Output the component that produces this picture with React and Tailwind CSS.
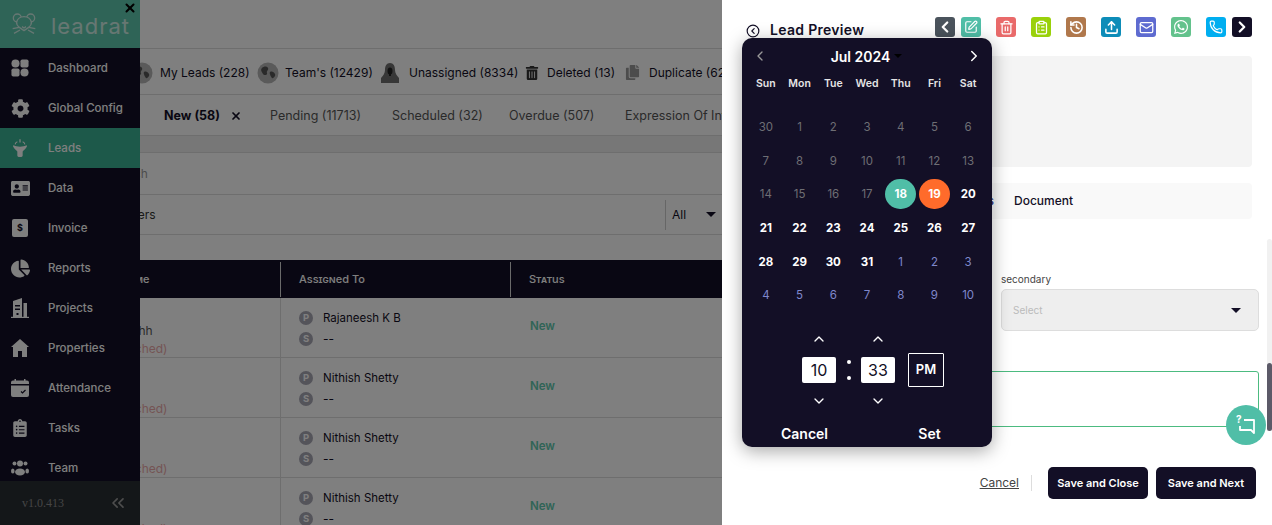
import React from "react";
import {
  ChevronLeft,
  ChevronRight,
  ChevronUp,
  ChevronDown,
  ChevronsLeft,
  CircleChevronLeft,
  SquarePen,
  Trash2,
  ClipboardList,
  History,
  Upload,
  Mail,
  Phone,
  X,
} from "lucide-react";
import {
  FaCog,
  FaAddressCard,
  FaChartPie,
  FaClipboardList,
  FaWhatsapp,
  FaTrashAlt,
  FaCopy,
} from "react-icons/fa";

const DashboardIcon = () => (
  <svg width="18" height="18" viewBox="0 0 20 20" fill="currentColor">
    <circle cx="5" cy="5" r="4.500" />
    <rect x="10.500" y="0.500" width="9" height="9" rx="2" />
    <rect x="0.500" y="10.500" width="9" height="9" rx="2" />
    <circle cx="15" cy="15" r="4.500" />
  </svg>
);

const FunnelIcon = () => (
  <svg width="16" height="18" viewBox="0 0 18 20" fill="currentColor">
    <path d="M2 7c2 1.200 4 1.600 7 1.600S14 8.200 16 7c1 0 1 1 .6 1.600C15.500 11 13 12.500 12 14v4.500c0 .8-.8 1.500-1.500 1.500h-3C6.800 20 6 19.300 6 18.500V14c-1-1.500-3.500-3-4.600-5.400C1 8 1 7 2 7z" />
    <rect x="8.300" y="0" width="1.400" height="4" rx=".7" />
    <path d="M3.500 6c.2-1.500 1-2.500 2.500-3M14.500 6c-.2-1.500-1-2.500-2.500-3" fill="none" stroke="currentColor" strokeWidth="1.200" />
  </svg>
);

const InvoiceIcon = () => (
  <div className="w-[16px] h-[18px] bg-white rounded-[2px] flex items-center justify-center text-[9px] font-bold text-[#130f26]">
    $
  </div>
);

const BuildingIcon = () => (
  <svg width="18" height="20" viewBox="0 0 18 20" fill="currentColor">
    <path d="M2 3l9-3v19H2V3zm2 4v1.500h5V7H4zm0 3.500V12h5v-1.500H4zM5.500 15v2h2v-2h-2z" fillRule="evenodd" />
    <path d="M12.500 5H16v14h-3.500z" />
    <rect x="0" y="18.800" width="18" height="1.200" />
  </svg>
);

const HouseIcon = () => (
  <svg width="18" height="18" viewBox="0 0 18 18" fill="currentColor">
    <path d="M9 0L0 8h2v10h5v-6h4v6h5V8h2L9 0z" />
  </svg>
);

const AttendanceIcon = () => (
  <svg width="18" height="18" viewBox="0 0 18 18" fill="currentColor">
    <rect x="3.500" y="0" width="1.500" height="3" />
    <rect x="13" y="0" width="1.500" height="3" />
    <path d="M0 3.500a2 2 0 012-2h14a2 2 0 012 2V5H0z" />
    <path d="M0 6.500h18V16a2 2 0 01-2 2H2a2 2 0 01-2-2z" />
    <path d="M10 12.500l1.500 1.500 3-3" fill="none" stroke="#130f26" strokeWidth="1.200" />
  </svg>
);

const TeamIcon = () => (
  <svg width="18" height="16" viewBox="0 0 18 16" fill="currentColor">
    <circle cx="9" cy="3.500" r="3" />
    <ellipse cx="9" cy="12" rx="5" ry="3.500" />
    <circle cx="3.500" cy="3.500" r="2" />
    <circle cx="14.500" cy="3.500" r="2" />
    <ellipse cx="1.800" cy="11" rx="1.800" ry="2.500" />
    <ellipse cx="16.200" cy="11" rx="1.800" ry="2.500" />
  </svg>
);

const GlobeBadge = () => (
  <svg width="22" height="22" viewBox="0 0 22 22">
    <circle cx="11" cy="11" r="10.500" fill="#b4b4b4" />
    <path d="M5 6c2-2 5-2 6 0s-2 3-1 5-3 3-4 1-3-4-1-6zM13 10c2-1 4 0 5 2s-2 5-3 4-3-5-2-6z" fill="#555" />
  </svg>
);

const HoodIcon = () => (
  <svg width="18" height="22" viewBox="0 0 18 22">
    <path d="M9 1c3.500 0 5 3 5 7 0 3 2 6 4 8v5H0v-5c2-2 4-5 4-8 0-4 1.500-7 5-7z" fill="#6f6f6f" />
    <ellipse cx="9" cy="9" rx="2.500" ry="3.500" fill="#222" />
    <rect x="8" y="9" width="2" height="5" fill="#222" />
  </svg>
);

const RatLogo = () => (
  <svg width="24" height="24" viewBox="0 0 36 36" fill="none" stroke="white" strokeWidth="2" strokeLinejoin="round" className="opacity-70">
    <circle cx="8" cy="9" r="6" />
    <circle cx="28" cy="9" r="6" />
    <path d="M7 15c1-5 6-8 11-8s10 3 11 8c.6 3-1.500 6-4 8l-7 5-7-5c-2.500-2-4.600-5-4-8z" fill="#5fc9ae" />
    <path d="M15 22l3 2 3-2M1 25l10-2M3 32l9-5M35 25l-10-2M33 32l-9-5" />
  </svg>
);

const ChatIcon = () => (
  <div className="relative w-[18px] h-[18px] text-white">
    <svg width="18" height="18" viewBox="0 0 18 18" fill="none" stroke="currentColor" strokeWidth="1.800" strokeLinejoin="round">
      <path d="M7 4h10v13l-3-3H3v-4" />
    </svg>
    <span className="absolute -left-[1px] -top-[2px] text-[10px] font-bold leading-none">?</span>
  </div>
);

const navItems = [
  { label: "Dashboard", icon: <DashboardIcon /> },
  { label: "Global Config", icon: <FaCog size={19} /> },
  { label: "Leads", icon: <FunnelIcon />, active: true },
  { label: "Data", icon: <FaAddressCard size={19} /> },
  { label: "Invoice", icon: <InvoiceIcon /> },
  { label: "Reports", icon: <FaChartPie size={19} /> },
  { label: "Projects", icon: <BuildingIcon /> },
  { label: "Properties", icon: <HouseIcon /> },
  { label: "Attendance", icon: <AttendanceIcon /> },
  { label: "Tasks", icon: <FaClipboardList size={18} /> },
  { label: "Team", icon: <TeamIcon /> },
];

const leadRows = [
  { name: "Rakshhh", assigned: "Rajaneesh K B" },
  { name: "", assigned: "Nithish Shetty" },
  { name: "", assigned: "Nithish Shetty" },
  { name: "", assigned: "Nithish Shetty" },
];

const muted = [30, 1, 2, 3, 4, 5, 6, 7, 8, 9, 10, 11, 12, 13, 14, 15, 16, 17];
const current = [20, 21, 22, 23, 24, 25, 26, 27, 28, 29, 30, 31];
const next = [1, 2, 3, 4, 5, 6, 7, 8, 9, 10];

const Sidebar = () => (
  <aside className="relative z-10 w-[140px] shrink-0 h-full flex flex-col bg-[#130f26] text-white">
    <div className="h-[48px] shrink-0 bg-[#5fc9ae] flex items-center pl-[12px]">
      <RatLogo />
      <span className="ml-[15px] mt-[4px] text-[22px] tracking-[1px] leading-none opacity-70">leadrat</span>
    </div>
    <nav className="flex-1 overflow-hidden">
      {navItems.map((item) => (
        <div
          key={item.label}
          className={`h-[40px] flex items-center ${item.active ? "bg-[#3ab394]" : ""}`}
        >
          <div className="w-[40px] flex justify-center">{item.icon}</div>
          <span className="ml-[8px] mt-[2px] text-[11.500px] font-medium">{item.label}</span>
        </div>
      ))}
    </nav>
    <div className="h-[44px] shrink-0 bg-[#292f33] flex items-center">
      <span className="ml-[22px] text-[12px] text-[#8a8a8a] font-[Liberation_Serif,serif]">v1.0.413</span>
      <ChevronsLeft size={20} className="ml-auto mr-[12px] text-[#9a9a9a]" />
    </div>
  </aside>
);

const TopStrip = () => (
  <div className="h-[46px] pt-[2px] border-b border-[#dcdcdc] flex items-center pl-[71px] text-[12px] text-[#130f26] whitespace-nowrap">
    <div className="w-[126px] shrink-0 flex items-center gap-[7px]"><GlobeBadge /><span>My Leads (228)</span></div>
    <div className="w-[124px] shrink-0 flex items-center gap-[6px]"><GlobeBadge /><span>Team's (12429)</span></div>
    <div className="w-[144px] shrink-0 flex items-center gap-[10px]"><HoodIcon /><span>Unassigned (8334)</span></div>
    <div className="w-[100px] shrink-0 flex items-center gap-[8px]"><FaTrashAlt size={14} className="text-[#333]" /><span>Deleted (13)</span></div>
    <div className="shrink-0 flex items-center gap-[9px]"><FaCopy size={15} className="text-[#999]" /><span>Duplicate (62)</span></div>
  </div>
);

const StatusTabs = () => (
  <div className="h-[41px] pt-[2px] border-b border-[#dcdcdc] flex items-center pl-[104px] text-[12.500px] text-[#555] whitespace-nowrap">
    <span className="w-[66px] shrink-0 font-bold text-[#130f26]">New (58)</span>
    <div className="w-[40px] shrink-0">
      <X size={12} strokeWidth={3.500} className="text-[#130f26]" />
    </div>
    <span className="w-[122px] shrink-0">Pending (11713)</span>
    <span className="w-[117px] shrink-0">Scheduled (32)</span>
    <span className="w-[116px] shrink-0">Overdue (507)</span>
    <span className="shrink-0">Expression Of Interest</span>
  </div>
);

const LeadTable = () => (
  <div>
    <div className="h-[38px] bg-[#130f26] text-white flex items-center text-[11px] font-medium [font-variant:small-caps]">
      <div className="w-[221px] h-[35px] shrink-0 border-r border-[#d5d5d5] flex items-center pl-[32px]">
        <span>Lead Name</span>
      </div>
      <div className="w-[230px] h-[35px] shrink-0 border-r border-[#d5d5d5] flex items-center pl-[18px]">
        Assigned To
      </div>
      <div className="pl-[18px]">Status</div>
    </div>
    {leadRows.map((row, i) => (
      <div key={i} className="h-[60px] border-b border-[#dcdcdc] flex text-[12px]">
        <div className="w-[221px] shrink-0 border-r border-[#dcdcdc] pl-[44px] pt-[25px]">
          <p className="text-[#555] leading-[16px] h-[16px]">{row.name}</p>
          <p className="text-[#eaa9a9] leading-[16px] mt-[2px] -ml-[33px] whitespace-nowrap">(Not Dispatched)</p>
        </div>
        <div className="w-[230px] shrink-0 pl-[18px] pt-[13px]">
          <div className="flex items-center gap-[10px] h-[14px]">
            <span className="w-[14px] h-[14px] rounded-full bg-[#a9a8b5] text-white text-[9.500px] font-bold flex items-center justify-center">P</span>
            <span className="mt-[2px] text-[#130f26] text-[11.500px]">{row.assigned}</span>
          </div>
          <div className="flex items-center gap-[10px] h-[14px] mt-[7px]">
            <span className="w-[14px] h-[14px] rounded-full bg-[#a9a8b5] text-white text-[9.500px] font-bold flex items-center justify-center">S</span>
            <span className="text-[#130f26]">--</span>
          </div>
        </div>
        <div className="pl-[19px] pt-[20px] text-[#5fc9ae] font-semibold text-[11.500px] leading-[16px]">New</div>
      </div>
    ))}
  </div>
);

const LeadsPage = () => (
  <main className="-ml-[80px] w-[662px] h-full overflow-hidden bg-white">
    <div className="h-[49px] border-b border-[#dcdcdc]" />
    <TopStrip />
    <StatusTabs />
    <div className="h-[17px] bg-[#efefef] border-b border-[#dcdcdc]" />
    <div className="h-[42px] border-b border-[#dcdcdc] flex items-center pl-[48px] text-[12px] text-[#999]">
      Search
    </div>
    <div className="h-[40px] border-b border-[#dcdcdc] flex items-center text-[12px] text-[#333]">
      <span className="w-[605px]">Advanced Filters</span>
      <div className="h-[30px] border-l border-[#ccc] flex items-center pl-[6px] gap-[20px] text-[#130f26]">
        <span>All</span>
        <span className="w-0 h-0 border-x-[5px] border-x-transparent border-t-[5px] border-t-[#130f26]" />
      </div>
    </div>
    <div className="h-[25px]" />
    <LeadTable />
  </main>
);

const actionClass = "w-[20px] h-[20px] rounded-[3px] flex items-center justify-center text-white shrink-0";

const ActionBar = () => (
  <div className="ml-auto flex items-center gap-[15px]">
    <div className={`${actionClass} bg-[#4a535c] -mr-[9px]`}><ChevronLeft size={18} strokeWidth={3} /></div>
    <div className={`${actionClass} bg-[#50bea7]`}><SquarePen size={14} strokeWidth={2} /></div>
    <div className={`${actionClass} bg-[#e96a6a]`}><Trash2 size={15} /></div>
    <div className={`${actionClass} bg-[#9ad10a]`}><ClipboardList size={15} /></div>
    <div className={`${actionClass} bg-[#b0784c]`}><History size={15} strokeWidth={2.500} /></div>
    <div className={`${actionClass} bg-[#0d8cb8]`}><Upload size={15} strokeWidth={2.500} /></div>
    <div className={`${actionClass} bg-[#5e6bd0]`}><Mail size={15} /></div>
    <div className={`${actionClass} bg-[#63c28c]`}><FaWhatsapp size={16} /></div>
    <div className={`${actionClass} bg-[#00aef0] -mr-[9px]`}><Phone size={14} /></div>
    <div className={`${actionClass} bg-[#130f26]`}><ChevronRight size={18} strokeWidth={3} /></div>
  </div>
);

const TimeColumn = ({ value }) => (
  <div className="w-[34px] flex flex-col items-center">
    <ChevronUp size={16} className="h-[16px]" />
    <div className="mt-[10px] w-[34px] h-[26px] bg-white rounded-[2px] text-[#130f26] text-[16px] flex items-center justify-center">
      {value}
    </div>
    <ChevronDown size={16} className="mt-[10px] h-[16px]" />
  </div>
);

const DatePicker = () => (
  <div className="absolute left-[20px] top-[38px] w-[250px] h-[409px] z-20 bg-[#130f26] rounded-[10px] text-white shadow-[0_4px_18px_rgba(0,0,0,0.35)]">
    <div className="h-[36px] flex items-center pl-[10px] pr-[9px]">
      <ChevronLeft size={16} className="text-[#999]" />
      <div className="flex-1 flex items-center justify-center gap-[4px] font-semibold text-[14px]">
        <span>Jul 2024</span>
        <span className="w-0 h-0 border-x-[4px] border-x-transparent border-t-[4px] border-t-black" />
      </div>
      <ChevronRight size={18} />
    </div>
    <div className="grid grid-cols-7 px-[7px] pt-[2px] h-[18px] items-center text-center text-[10.500px] font-semibold text-[#e5e5e5]">
      {["Sun", "Mon", "Tue", "Wed", "Thu", "Fri", "Sat"].map((d) => (
        <span key={d}>{d}</span>
      ))}
    </div>
    <div className="mt-[18px] grid grid-cols-7 px-[7px] auto-rows-[33.600px] items-center justify-items-center text-[11.500px]">
      {muted.map((d, i) => (
        <span key={i} className="pt-[2px] text-[#6e6e74]">{d}</span>
      ))}
      <span className="w-[31px] h-[30px] pt-[1px] rounded-full bg-[#50bea7] font-bold flex items-center justify-center">18</span>
      <span className="w-[31px] h-[30px] pt-[1px] rounded-full bg-[#ff6b2b] font-bold flex items-center justify-center">19</span>
      {current.map((d) => (
        <span key={d} className="pt-[2px] font-bold">{d}</span>
      ))}
      {next.map((d) => (
        <span key={d} className="pt-[2px] text-[#7f87cc]">{d}</span>
      ))}
    </div>
    <div className="mt-[19px] pl-[60px] flex items-center h-[78px]">
      <TimeColumn value="10" />
      <div className="w-[25px] h-[20px] flex flex-col justify-between items-center">
        <span className="w-[4px] h-[4px] bg-white rounded-full" />
        <span className="w-[4px] h-[4px] bg-white rounded-full" />
      </div>
      <TimeColumn value="33" />
      <div className="ml-[13px] w-[36px] h-[34px] border border-white rounded-[1px] flex items-center justify-center text-[13px] font-semibold">
        PM
      </div>
    </div>
    <div className="mt-[11px] h-[27px] flex text-[14px] leading-[27px] font-semibold">
      <div className="w-[125px] text-center">Cancel</div>
      <div className="flex-1 text-center">Set</div>
    </div>
  </div>
);

const PreviewPanel = () => (
  <section className="relative flex-1 h-full bg-white text-[#130f26]">
    <div className="pt-[17px] pl-[24px] pr-[20px] flex items-center h-[37px]">
      <CircleChevronLeft size={14} className="mt-[8px]" />
      <span className="ml-[10px] mt-[4px] text-[14px] font-semibold tracking-[0.3px]">Lead Preview</span>
      <ActionBar />
    </div>
    <div className="mt-[19px] mx-[20px] h-[111px] bg-[#f4f4f4] rounded-[4px]" />
    <div className="mt-[16px] mx-[20px] h-[36px] bg-[#f9f9f9] rounded-[4px] flex items-center text-[12px] font-medium">
      <span className="w-[252px] text-right text-[#2f2f7a]">Notes</span>
      <span className="ml-[20px]">Document</span>
    </div>
    <div className="mt-[53px] flex justify-end pr-[13px]">
      <div className="w-[258px]">
        <label className="block h-[14px] leading-[14px] text-[10px] text-[#444]">secondary</label>
        <div className="mt-[3px] h-[42px] bg-[#eeeeee] border border-[#dddddd] rounded-[5px] flex items-center pl-[11px] pr-[17px] text-[10px] text-[#bbbbbb]">
          <span>Select</span>
          <span className="ml-auto w-0 h-0 border-x-[5px] border-x-transparent border-t-[5px] border-t-[#130f26]" />
        </div>
      </div>
    </div>
    <div className="mt-[40px] ml-[20px] mr-[13px] h-[56px] border border-[#4cbb80] rounded-[3px]" />
    <div className="mt-[40px] flex items-center justify-end pr-[16px] text-[11px] font-semibold">
      <span className="underline font-normal text-[12px] text-[#444]">Cancel</span>
      <span className="mx-[12px] h-[16px] border-l border-[#ddd]" />
      <button className="ml-[4px] w-[100px] h-[32px] bg-[#130f26] text-white rounded-[5px]">Save and Close</button>
      <button className="ml-[8px] w-[100px] h-[32px] bg-[#130f26] text-white rounded-[5px]">Save and Next</button>
    </div>
    <div className="absolute right-0 top-[239px] w-[5px] h-[192px] bg-[#f1f1f1] rounded-[3px]">
      <div className="mt-[124px] h-[68px] bg-[#5c5a68] rounded-[3px]" />
    </div>
    <div className="absolute left-[504px] top-[405px] w-[40px] h-[40px] rounded-full bg-[#50bea7] flex items-center justify-center z-10">
      <ChatIcon />
    </div>
    <DatePicker />
  </section>
);

const App = () => {
  return (
    <div className="w-[1272px] h-[525px] flex overflow-hidden bg-white font-[Inter,sans-serif]">
      <div className="relative w-[722px] h-full shrink-0 flex overflow-hidden">
        <Sidebar />
        <LeadsPage />
        {/* page dim behind the preview drawer */}
        <div className="absolute inset-0 z-20 bg-black/50" />
        <X size={14} strokeWidth={3.500} className="absolute left-[123px] top-[1px] z-30 text-black" />
      </div>
      <PreviewPanel />
    </div>
  );
};

export default App;
